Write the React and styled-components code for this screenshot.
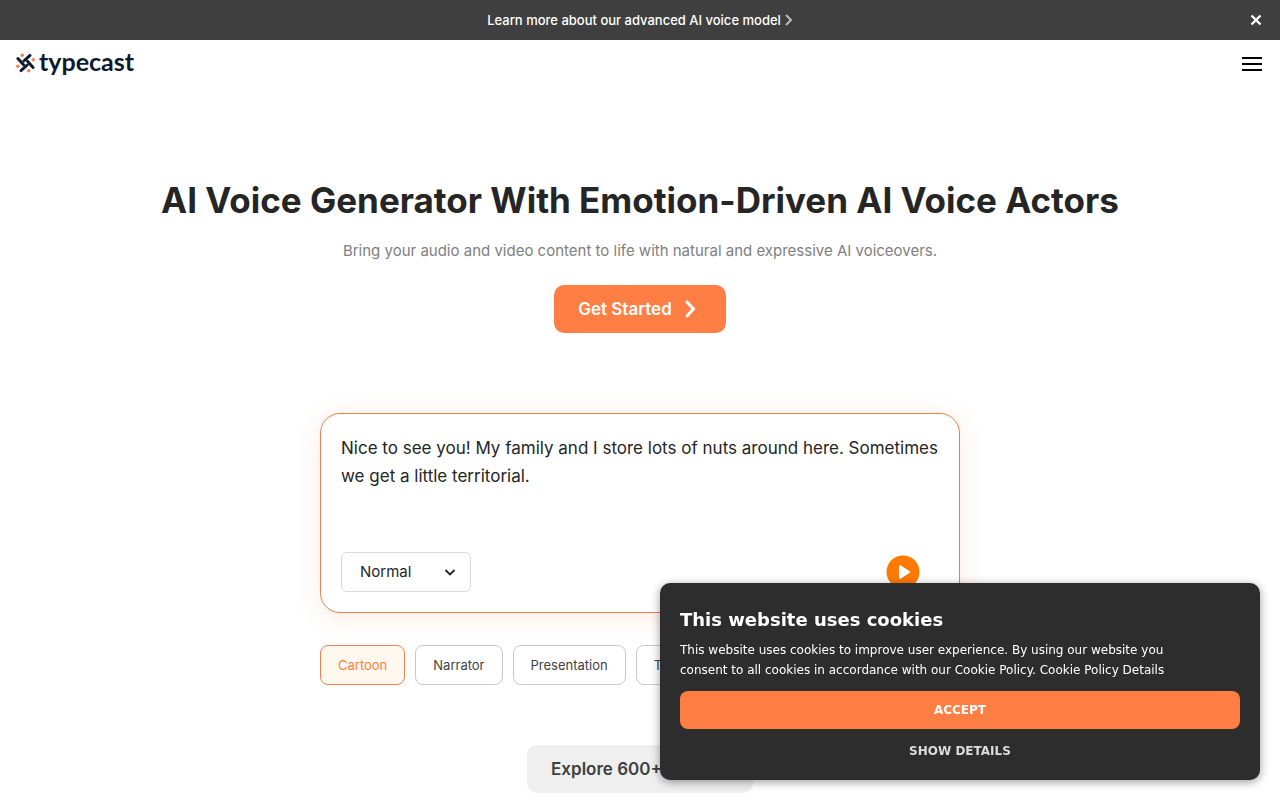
import React, { useState } from "react";
import styled, { createGlobalStyle } from "styled-components";

const GlobalStyle = createGlobalStyle`
  *, *::before, *::after {
    box-sizing: border-box;
  }

  body {
    margin: 0;
    background: #fff;
    color: #252525;
    font-family: Inter, "Liberation Sans", sans-serif;
  }

  button, select, textarea {
    margin: 0;
    font-family: inherit;
  }
`;

const Banner = styled.div`
  display: grid;
  grid-template-columns: 40px 1fr 40px;
  align-items: center;
  height: 40px;
  padding: 0 4px;
  background: #3f3f3f;
`;

const BannerLink = styled.a`
  grid-column: 2;
  display: flex;
  align-items: center;
  justify-content: center;
  gap: 4px;
  color: #fff;
  font-size: 13px;
  font-weight: 500;
  line-height: 20px;
  text-decoration: none;
`;

const IconButton = styled.button`
  display: flex;
  align-items: center;
  justify-content: center;
  width: 40px;
  height: 40px;
  padding: 0;
  border: 0;
  background: none;
  cursor: pointer;
`;

const Header = styled.header`
  display: flex;
  align-items: center;
  justify-content: space-between;
  height: 48px;
  padding: 0 8px 0 16px;
`;

const Logo = styled.a`
  display: flex;
  align-items: center;
  gap: 3px;
  padding-bottom: 2px;
  color: #0d1a30;
  font-family: Lato, sans-serif;
  font-size: 25px;
  font-weight: 700;
  line-height: 22px;
  text-decoration: none;

  span {
    padding-bottom: 4px;
  }
`;

const Main = styled.main`
  display: flex;
  flex-direction: column;
  align-items: center;
  padding: 87px 16px 0;
`;

const Title = styled.h1`
  margin: 0;
  font-size: 35px;
  font-weight: 700;
  line-height: 50px;
  text-align: center;
`;

const Subtitle = styled.p`
  margin: 12px 0 20px;
  color: #808080;
  font-size: 15px;
  line-height: 28px;
  text-align: center;
`;

const LinkButton = styled.a`
  display: flex;
  align-items: center;
  gap: 10px;
  height: 48px;
  padding: 0 24px;
  border-radius: 10px;
  background: ${({ $primary }) => ($primary ? "#ff7e43" : "#efefef")};
  color: ${({ $primary }) => ($primary ? "#fff" : "#3f3f3f")};
  font-size: 17px;
  font-weight: 600;
  line-height: 28px;
  text-decoration: none;
`;

const Demo = styled.section`
  display: flex;
  flex-direction: column;
  gap: 32px;
  width: 100%;
  max-width: 640px;
  margin: 80px 0 60px;
`;

const Card = styled.div`
  display: flex;
  flex-direction: column;
  padding: 20px;
  border: 1px solid #e9804f;
  border-radius: 20px;
  background: #fff;
  box-shadow: 0 4px 24px rgba(255, 126, 67, 0.16);
`;

const Script = styled.textarea`
  display: block;
  width: 100%;
  height: 118px;
  padding: 0;
  border: 0;
  outline: 0;
  resize: none;
  overflow: hidden;
  background: none;
  color: #252525;
  font-size: 17px;
  line-height: 28px;
`;

const CardFooter = styled.div`
  display: flex;
  align-items: center;
  justify-content: space-between;
  padding-right: 16px;
`;

const SelectBox = styled.div`
  display: grid;
  align-items: center;
  width: 130px;

  > * {
    grid-area: 1 / 1;
  }

  > svg {
    justify-self: end;
    margin-right: 14px;
    pointer-events: none;
  }
`;

const Select = styled.select`
  width: 100%;
  height: 40px;
  padding: 0 18px;
  border: 1px solid #d9d9d9;
  border-radius: 6px;
  appearance: none;
  background: #fff;
  color: #252525;
  font-size: 15px;
  line-height: 24px;
`;

const Tags = styled.div`
  display: flex;
  gap: 10px;
`;

const Tag = styled.button`
  height: 40px;
  padding: 0 17px;
  border: 1px solid ${({ $active }) => ($active ? "#f0814e" : "#c8c8c8")};
  border-radius: 8px;
  background: ${({ $active }) => ($active ? "#fff8ee" : "#fff")};
  color: ${({ $active }) => ($active ? "#ff7e43" : "#3f3f3f")};
  font-size: 13px;
  line-height: 20px;
  cursor: pointer;
`;

const CookieDialog = styled.div`
  position: fixed;
  right: 20px;
  bottom: 20px;
  display: flex;
  flex-direction: column;
  width: 600px;
  max-width: calc(100% - 40px);
  padding: 24px 20px 8px;
  border-radius: 10px;
  background: #2d2d2d;
  box-shadow: 0 2px 10px rgba(0, 0, 0, 0.4);
  color: #fff;
  font-family: "DejaVu Sans", sans-serif;
`;

const CookieTitle = styled.h2`
  margin: 0 0 8px;
  font-size: 18px;
  font-weight: 700;
  line-height: 25px;
`;

const CookieText = styled.p`
  margin: 0 0 11px;
  padding-right: 40px;
  font-size: 12px;
  line-height: 20px;

  a {
    color: inherit;
    text-decoration: none;
  }
`;

const CookieButton = styled.button`
  height: ${({ $accept }) => ($accept ? "38px" : "43px")};
  padding: 0;
  border: 0;
  border-radius: 8px;
  background: ${({ $accept }) => ($accept ? "#ff7e43" : "transparent")};
  color: ${({ $accept }) => ($accept ? "#fff" : "#dcdcdc")};
  font-size: 12px;
  font-weight: 700;
  line-height: 20px;
  text-transform: uppercase;
  cursor: pointer;
`;

const tags = ["Cartoon", "Narrator", "Presentation", "Training"];

const LogoMark = () => (
  <svg width="20" height="20" viewBox="0 0 20 20" fill="none" aria-hidden="true">
    <g stroke="#0d1a30" strokeWidth="3" strokeLinecap="round">
      <path d="M7.800 8 14 2.400" />
      <path d="M11.500 8.300 17.100 14.500" />
      <path d="M11.200 12 5 17.600" />
      <path d="M7.500 11.700 1.900 5.500" />
    </g>
    <g fill="#ff7e43">
      <circle cx="6.3" cy="2.3" r="1.7" />
      <circle cx="17.2" cy="6.8" r="1.7" />
      <circle cx="12.7" cy="17.7" r="1.7" />
      <circle cx="1.8" cy="13.2" r="1.7" />
    </g>
  </svg>
);

export default function App() {
  const [active, setActive] = useState("Cartoon");

  return (
    <>
      <GlobalStyle />
      <Banner>
        <BannerLink href="#model">
          Learn more about our advanced AI voice model
          <svg width="8" height="14" viewBox="0 0 8 14" fill="none" stroke="#bdbdbd" strokeWidth="2" aria-hidden="true">
            <path d="M1 2l5 5-5 5" />
          </svg>
        </BannerLink>
        <IconButton aria-label="Close banner">
          <svg width="12" height="12" viewBox="0 0 12 12" stroke="#fff" strokeWidth="2.4" aria-hidden="true">
            <path d="M1.5 1.5l9 9M10.5 1.5l-9 9" />
          </svg>
        </IconButton>
      </Banner>

      <Header>
        <Logo href="#home">
          <LogoMark />
          <span>typecast</span>
        </Logo>
        <IconButton aria-label="Open menu">
          <svg width="20" height="16" viewBox="0 0 20 16" stroke="#000" strokeWidth="2" aria-hidden="true">
            <path d="M0 2h20M0 8h20M0 14h20" />
          </svg>
        </IconButton>
      </Header>

      <Main>
        <Title>AI Voice Generator With Emotion-Driven AI Voice Actors</Title>
        <Subtitle>Bring your audio and video content to life with natural and expressive AI voiceovers.</Subtitle>
        <LinkButton href="#start" $primary>
          Get Started
          <svg width="20" height="20" viewBox="0 0 20 20" fill="none" stroke="#fff" strokeWidth="3" strokeLinecap="round" aria-hidden="true">
            <path d="M5 3l6.500 7L5 17" />
          </svg>
        </LinkButton>

        <Demo>
          <Card>
            <Script
              aria-label="Script"
              spellCheck={false}
              defaultValue="Nice to see you! My family and I store lots of nuts around here. Sometimes we get a little territorial."
            />
            <CardFooter>
              <SelectBox>
                <Select aria-label="Emotion">
                  <option>Normal</option>
                </Select>
                <svg width="14" height="14" viewBox="0 0 14 14" fill="none" stroke="#252525" strokeWidth="1.8" aria-hidden="true">
                  <path d="M2.500 5L7 9.500 11.500 5" />
                </svg>
              </SelectBox>
              <IconButton aria-label="Play">
                <svg width="34" height="34" viewBox="0 0 34 34" aria-hidden="true">
                  <circle cx="17" cy="17" r="16.500" fill="#ff7a00" />
                  <path d="M14 11.200v11.600L23.200 17z" fill="#fff" stroke="#fff" strokeWidth="2" strokeLinejoin="round" />
                </svg>
              </IconButton>
            </CardFooter>
          </Card>
          <Tags>
            {tags.map((tag) => (
              <Tag key={tag} $active={tag === active} onClick={() => setActive(tag)}>
                {tag}
              </Tag>
            ))}
          </Tags>
        </Demo>

        <LinkButton href="#characters">Explore 600+ Avatars</LinkButton>
      </Main>

      <CookieDialog role="dialog" aria-labelledby="cookie-title">
        <CookieTitle id="cookie-title">This website uses cookies</CookieTitle>
        <CookieText>
          This website uses cookies to improve user experience. By using our website you consent to all cookies in
          accordance with our Cookie Policy. <a href="#policy">Cookie Policy Details</a>
        </CookieText>
        <CookieButton $accept>Accept</CookieButton>
        <CookieButton>Show details</CookieButton>
      </CookieDialog>
    </>
  );
}
